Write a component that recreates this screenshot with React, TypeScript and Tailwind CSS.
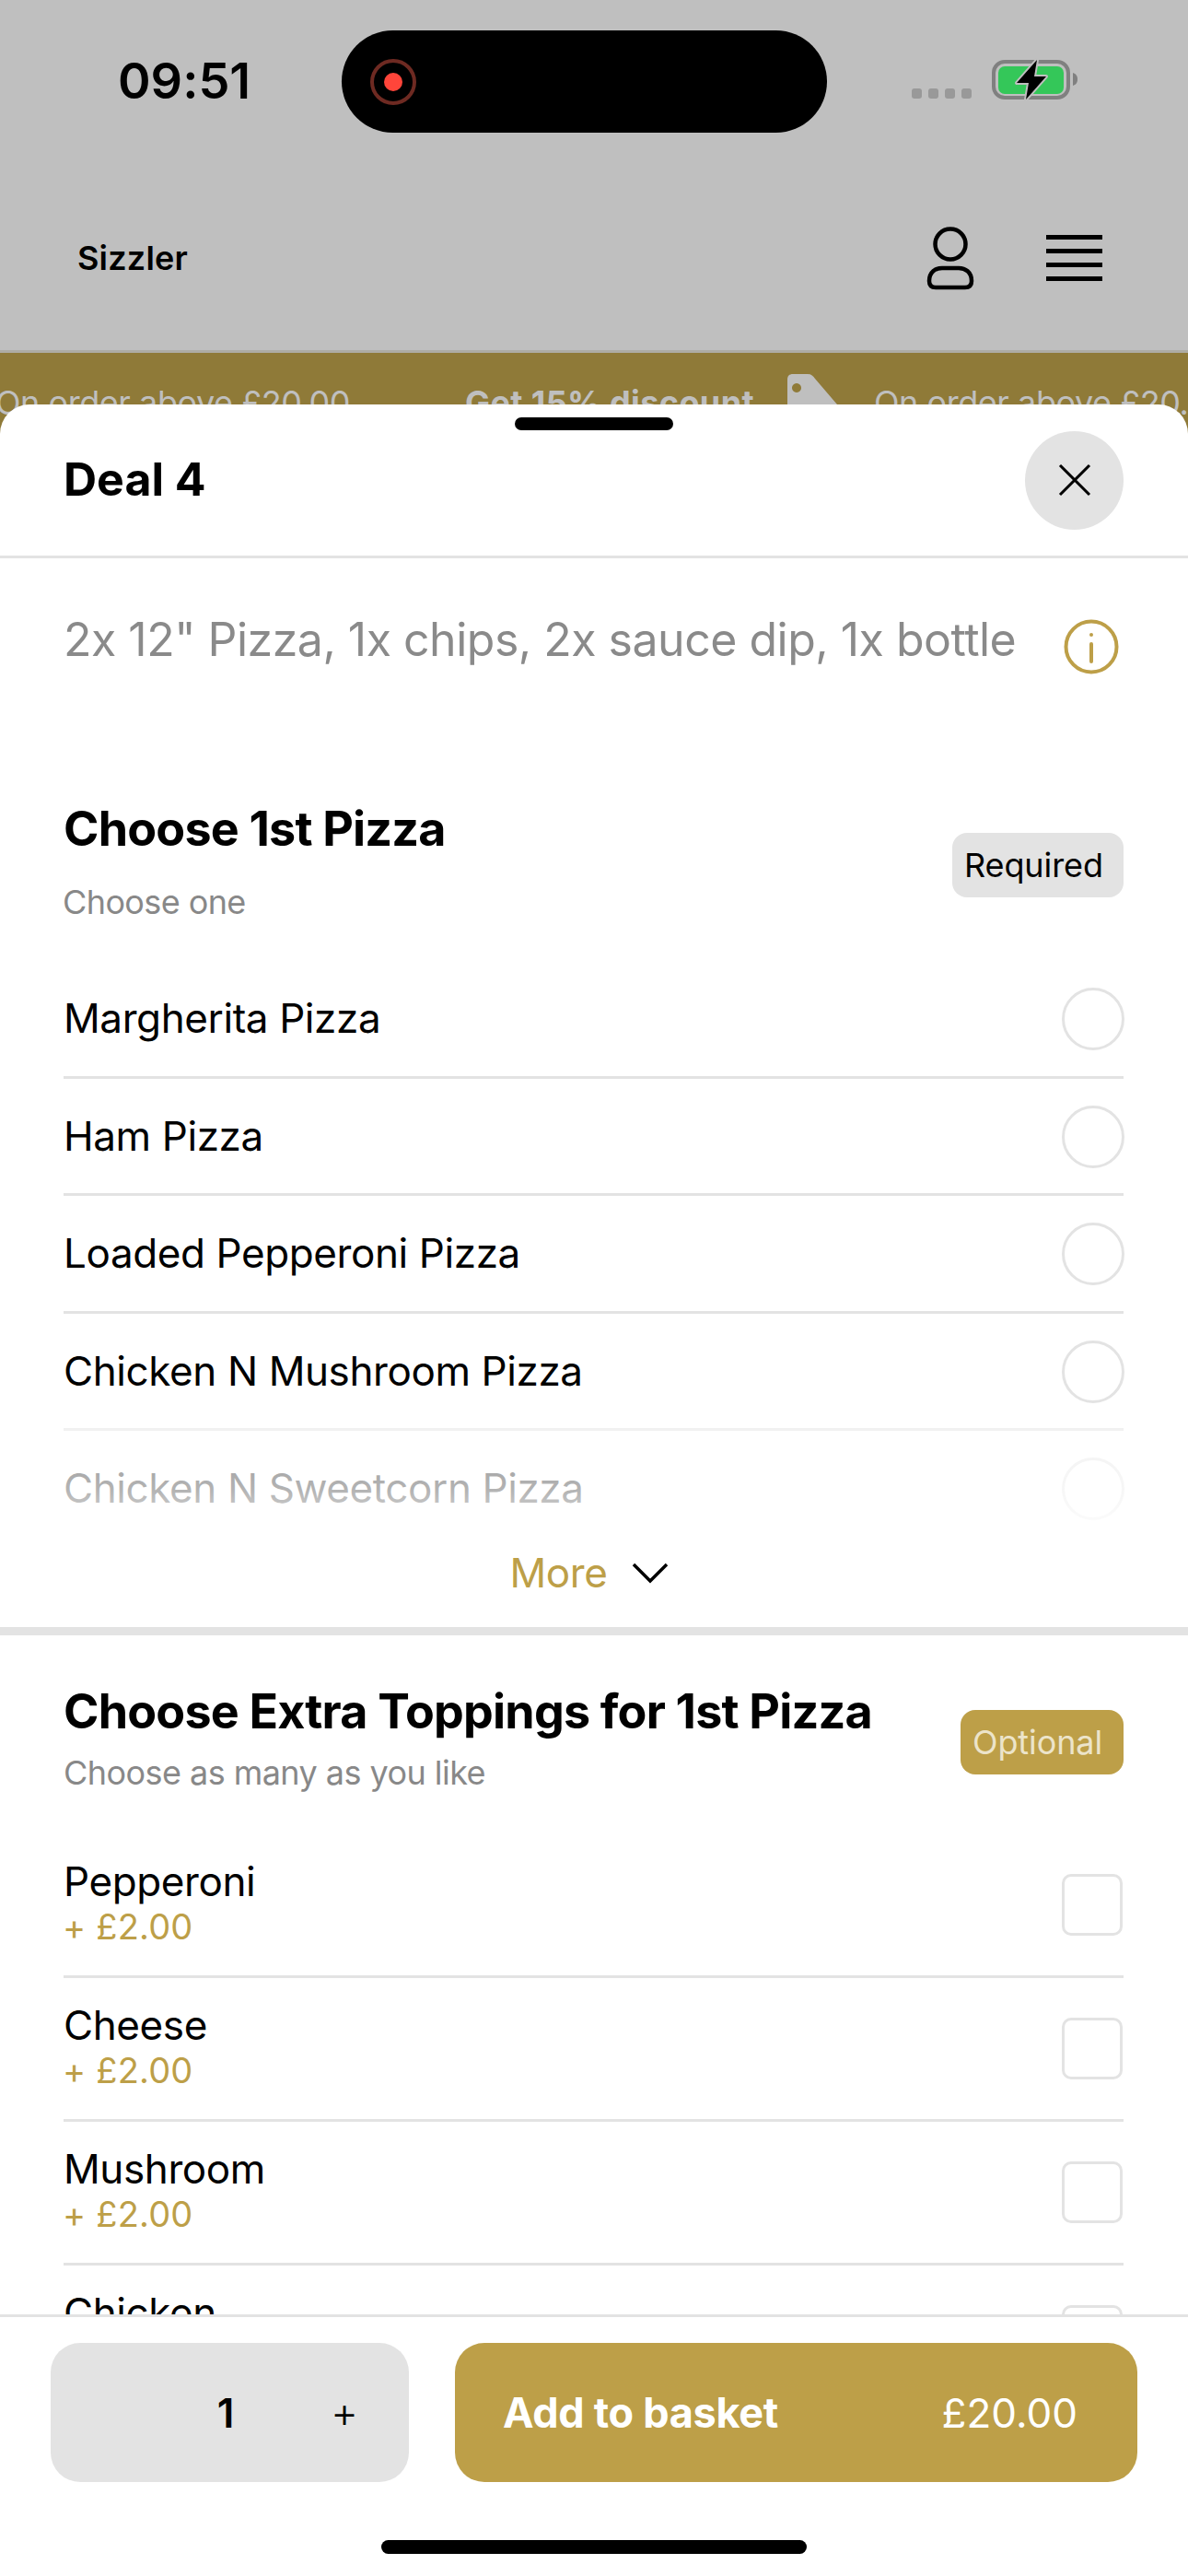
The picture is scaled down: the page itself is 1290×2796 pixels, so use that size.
const gold = '#bd9f48';

function BatteryIcon() {
  return (
    <svg width="96" height="50" viewBox="0 0 96 50" className="mt-[61px] ml-[22px] shrink-0">
      <rect x="2" y="6" width="81" height="39" rx="12" fill="none" stroke="#808080" strokeWidth="4" />
      <path d="M88 18c3 1 5 3 5 7s-2 6-5 7z" fill="#808080" />
      <rect x="7" y="11" width="71" height="30" rx="7" fill="#34c759" />
      <path d="M49 4 27 29h13l-3 18 22-25H46z" fill="#000" stroke="#bfbfbf" strokeWidth="4" paintOrder="stroke" strokeLinejoin="round" />
    </svg>
  );
}

function UserIcon() {
  return (
    <svg width="56" height="70" viewBox="0 0 56 70" className="shrink-0">
      <circle cx="28" cy="20" r="16.5" fill="none" stroke="#000" strokeWidth="4.5" />
      <path d="M5 60c0-10 7-14 14-14h18c7 0 14 4 14 14 0 5-3 7-7 7H12c-4 0-7-2-7-7z" fill="none" stroke="#000" strokeWidth="4.5" />
    </svg>
  );
}

function TagIcon() {
  return (
    <svg width="62" height="84" viewBox="0 0 62 84" className="shrink-0 -mt-[1px]">
      <path fillRule="evenodd" d="M6 0h16c4 0 6 2 8 5l30 35v44H0V6c0-4 2-6 6-6zm4 10a5 5 0 1 0 .01 0z" fill="#bfbfbf" />
    </svg>
  );
}

function RadioRow({ name, last }: { name: string; last?: boolean }) {
  return (
    <div className={last ? 'flex items-center justify-between h-[124px]' : 'flex items-center justify-between h-[127.5px] border-b-[3px] border-[#e3e3e3]'}>
      <span className="text-[44px] leading-[60px] tracking-[-0.4px] text-black">{name}</span>
      <div className="w-[68px] h-[68px] -mr-[1px] mt-[2px] rounded-full border-[3px] border-[#e3e3e3]" />
    </div>
  );
}

function ToppingRow({ name }: { name: string }) {
  return (
    <div className="flex items-start justify-between h-[156px] pt-[25px] border-b-[3px] border-[#e3e3e3]">
      <div>
        <div className="text-[44px] leading-[52px] tracking-[-0.4px] text-black">{name}</div>
        <div className="-ml-[1px] text-[38px] leading-[46px] tracking-[0.2px]" style={{ color: gold }}>+ £2.00</div>
      </div>
      <div className="w-[66px] h-[67px] mt-[18px] mr-[1px] rounded-[10px] border-[3px] border-[#e3e3e3]" />
    </div>
  );
}

export default function App() {
  return (
    <div className="relative w-[1290px] h-[2796px] overflow-hidden bg-[#bfbfbf] font-['Inter',sans-serif] [font-feature-settings:'calt'_0]">
      {/* Status bar */}
      <div className="flex items-start h-[150px] pl-[128px]">
        <div className="w-[243px] mt-[54px] text-[54px] leading-[68px] font-semibold text-black">09:51</div>
        <div className="flex items-center w-[527px] h-[111px] mt-[33px] pl-[31px] rounded-[56px] bg-black">
          <div className="flex items-center justify-center w-[50px] h-[50px] rounded-full border-[4px] border-[#6e2a22]">
            <div className="w-[20px] h-[20px] rounded-full bg-[#ff453a]" />
          </div>
        </div>
        <div className="flex gap-[7px] ml-[92px] mt-[96px]">
          <div className="w-[11px] h-[11px] rounded-[3px] bg-[#999999]" />
          <div className="w-[11px] h-[11px] rounded-[3px] bg-[#999999]" />
          <div className="w-[11px] h-[11px] rounded-[3px] bg-[#999999]" />
          <div className="w-[11px] h-[11px] rounded-[3px] bg-[#999999]" />
        </div>
        <BatteryIcon />
      </div>

      {/* Nav */}
      <div className="flex items-center justify-between h-[233px] pl-[84px] pr-[93px] pt-[30px] border-b-[3px] border-[#aeaca4]">
        <span className="text-[36px] font-semibold tracking-[0.2px] text-black">Sizzler</span>
        <div className="flex items-center gap-[76px]">
          <UserIcon />
          <div className="flex flex-col gap-[10px] w-[61px]">
            <div className="h-[5px] bg-black" />
            <div className="h-[5px] bg-black" />
            <div className="h-[5px] bg-black" />
            <div className="h-[5px] bg-black" />
          </div>
        </div>
      </div>

      {/* Offer banner, mostly covered by the sheet */}
      <div className="flex items-start h-[110px] pt-[24px] bg-[#8f7a38] whitespace-nowrap overflow-hidden text-[#bfbfbf] text-[36px] leading-[60px]">
        <span className="-ml-[5px] w-[510px] shrink-0 tracking-[-0.45px]">On order above £20.00</span>
        <span className="font-bold w-[350px] shrink-0 tracking-[0.4px]">Get 15% discount</span>
        <TagIcon />
        <span className="ml-[32px] shrink-0 tracking-[-0.45px]">On order above £20.00</span>
      </div>

      {/* Deal sheet */}
      <div className="absolute top-[439px] left-0 w-[1290px] h-[2357px] flex flex-col rounded-t-[32px] bg-white overflow-hidden">
        <div className="absolute top-[14px] left-[559px] w-[172px] h-[14px] rounded-full bg-black" />

        <div className="flex items-center justify-between shrink-0 h-[167px] pl-[69px] pr-[70px] border-b-[3px] border-[#e3e3e3]">
          <span className="-mt-[2px] text-[50px] font-bold text-black">Deal 4</span>
          <div className="flex items-center justify-center w-[107px] h-[107px] rounded-full bg-[#e3e3e3]">
            <svg width="36" height="36" viewBox="0 0 36 36" fill="none" stroke="#000" strokeWidth="3">
              <path d="M2 2l32 32M34 2 2 34" />
            </svg>
          </div>
        </div>

        <div className="flex-1 min-h-0 overflow-hidden">
          <div className="flex items-start justify-between pt-[58px] pl-[69px] pr-[75px]">
            <span className="text-[50px] leading-[60px] tracking-[-0.5px] text-[#8a8a8a] whitespace-nowrap">2x 12" Pizza, 1x chips, 2x sauce dip, 1x bottle</span>
            <svg width="60" height="60" viewBox="0 0 60 60" className="mt-[8px] shrink-0" fill="none" stroke={gold} strokeWidth="4">
              <circle cx="30" cy="30" r="27.5" />
              <path d="M30 27v19" strokeLinecap="round" />
              <circle cx="30" cy="17" r="2" fill={gold} stroke="none" />
            </svg>
          </div>

          {/* Choose 1st pizza */}
          <div className="relative pl-[69px] pr-[70px] mt-[138px]">
            <div className="flex items-start justify-between">
              <div>
                <h2 className="text-[52px] leading-[60px] tracking-[-0.8px] font-bold text-black">Choose 1st Pizza</h2>
                <p className="mt-[27px] -ml-[1px] text-[36px] leading-[44px] tracking-[-0.6px] text-[#888888]">Choose one</p>
              </div>
              <div className="flex items-center w-[186px] h-[70px] mt-[34px] pl-[13px] rounded-[16px] bg-[#e3e3e3] text-[36px] tracking-[-0.1px] text-black">Required</div>
            </div>

            <div className="mt-[42px]">
              <RadioRow name="Margherita Pizza" />
              <RadioRow name="Ham Pizza" />
              <RadioRow name="Loaded Pepperoni Pizza" />
              <RadioRow name="Chicken N Mushroom Pizza" />
              <RadioRow name="Chicken N Sweetcorn Pizza" last />
            </div>
            {/* Fade over the collapsed list */}
            <div className="absolute left-0 right-0 bottom-[0px] h-[150px] bg-[linear-gradient(to_bottom,rgba(255,255,255,0),rgba(255,255,255,0.6)_20%,rgba(255,255,255,0.7)_60%,rgba(255,255,255,0.95))]" />
          </div>

          <div className="flex items-center justify-center gap-[26px] h-[60px] mb-[29px] pr-[11px]">
            <span className="text-[44px] leading-[60px] tracking-[-0.4px]" style={{ color: gold }}>More</span>
            <svg width="40" height="24" viewBox="0 0 40 24" fill="none" stroke="#000" strokeWidth="3.5">
              <path d="M2 3l18 18L38 3" />
            </svg>
          </div>
          <div className="h-[9px] bg-[#e3e3e3]" />

          {/* Extra toppings */}
          <div className="pl-[69px] pr-[70px] pt-[53px]">
            <div className="flex items-start justify-between">
              <div>
                <h2 className="text-[52px] leading-[60px] tracking-[-0.8px] font-bold text-black whitespace-nowrap">Choose Extra Toppings for 1st Pizza</h2>
                <p className="mt-[14px] text-[36px] leading-[44px] tracking-[-0.55px] text-[#888888]">Choose as many as you like</p>
              </div>
              <div className="flex items-center w-[177px] h-[70px] mt-[28px] pl-[13px] rounded-[16px] bg-[#bd9f48] text-[36px] tracking-[-0.1px] text-[#ece4ca]">Optional</div>
            </div>
            <div className="mt-[45px]">
              <ToppingRow name="Pepperoni" />
              <ToppingRow name="Cheese" />
              <ToppingRow name="Mushroom" />
              <ToppingRow name="Chicken" />
            </div>
          </div>
        </div>

        {/* Footer */}
        <div className="relative shrink-0 h-[284px] pt-[28px] px-[55px] border-t-[3px] border-[#e3e3e3] bg-white">
          <div className="flex gap-[50px]">
            <div className="flex items-center w-[389px] h-[151px] rounded-[32px] bg-[#e3e3e3] text-black">
              <span className="ml-[160px] w-[60px] text-center text-[44px] font-semibold">1</span>
              <span className="ml-[79px] w-[40px] text-center text-[46px] font-light">+</span>
            </div>
            <div className="flex flex-1 items-center justify-between h-[151px] pl-[52px] pr-[65px] rounded-[32px] bg-[#bd9f48] text-white">
              <span className="text-[45px] font-bold tracking-[-0.3px]">Add to basket</span>
              <span className="text-[44px]">£20.00</span>
            </div>
          </div>
          <div className="absolute left-[414px] top-[242px] w-[462px] h-[15px] rounded-full bg-black" />
        </div>
      </div>
    </div>
  );
}
